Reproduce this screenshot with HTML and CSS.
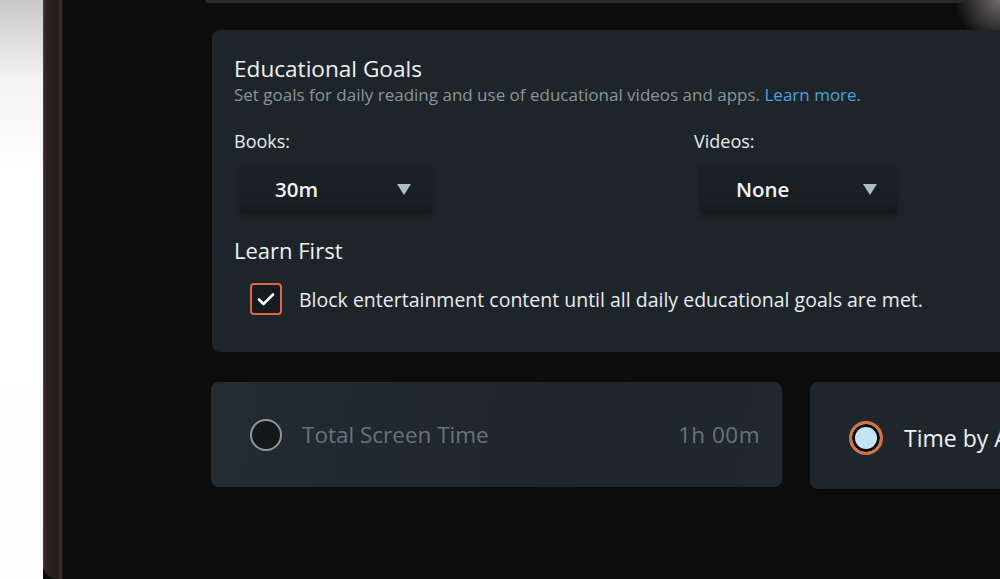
FILE: index.html
```html
<!DOCTYPE html>
<html lang="en">
<head>
  <meta charset="UTF-8">
  <title>Parental Controls - Educational Goals</title>
  <link rel="stylesheet" href="styles.css">
</head>
<body>

  <div class="backdrop"></div>
  <div class="bezel"></div>

  <main class="screen">
    <div class="prev-card"></div>

    <section class="card goals">
      <h1>Educational Goals</h1>
      <p class="subtitle">Set goals for daily reading and use of educational videos and apps. <span class="link">Learn more.</span></p>

      <div class="goal-grid">
        <div class="goal">
          <label>Books:</label>
          <div class="dropdown books">
            <span class="value">30m</span>
            <span class="caret"></span>
          </div>
        </div>
        <div class="goal">
          <label>Videos:</label>
          <div class="dropdown videos">
            <span class="value">None</span>
            <span class="caret"></span>
          </div>
        </div>
      </div>

      <h2>Learn First</h2>
      <div class="check-row">
        <span class="checkbox">
          <svg width="18" height="14" viewBox="0 0 18 14"><path d="M2 7.5l4.5 4.5L16 2.5" fill="none" stroke="#f4f6f7" stroke-width="2.6" stroke-linecap="round" stroke-linejoin="round"/></svg>
        </span>
        <span class="check-text">Block entertainment content until all daily educational goals are met.</span>
      </div>
    </section>

    <div class="option-row">
      <div class="card option total">
        <span class="radio"></span>
        <span class="option-label">Total Screen Time</span>
        <span class="option-value">1h 00m</span>
      </div>
      <div class="card option bytype">
        <span class="radio selected"></span>
        <span class="option-label">Time by Activity</span>
      </div>
    </div>
  </main>

</body>
</html>
```

FILE: styles.css
```css
/* Global reset */
* {
  margin: 0;
  padding: 0;
  box-sizing: border-box;
  font-family: 'Open Sans', sans-serif;
}

body {
  display: flex;
  width: 1000px;
  height: 579px;
  overflow: hidden;
  background-color: #0c0a0a;
}

/* Photo surroundings */
.backdrop {
  flex: 0 0 43px;
  background: linear-gradient(to bottom, #c9c9c9, #f4f4f4 14%, #ffffff 30%, #fdfdfd);
}

.bezel {
  flex: 0 0 20px;
  background: linear-gradient(to right, #4d3d39 0, #2c2221 3px, #231b1a 15px, #3e322f 18px, #120e0e 20px);
  border-bottom-left-radius: 14px;
}

.screen {
  flex: 1;
  min-width: 0;
  padding-left: 149px;
  display: flex;
  flex-direction: column;
  background: radial-gradient(circle at 100% 0, rgba(190, 185, 185, 0.55) 0, rgba(190, 185, 185, 0) 45px), #0d0c0d;
}

.prev-card {
  width: 760px;
  height: 3px;
  margin-left: -7px;
  background-color: #262b2f;
  border-radius: 0 0 6px 6px;
}

.card {
  flex-shrink: 0;
  background-color: #1e252a;
  border-radius: 8px;
}

/* Educational goals card */
.goals {
  width: 840px;
  margin-top: 27px;
  padding: 25px 22px 37px;
  color: #e8ecee;
}

.goals h1 {
  font-size: 22.6px;
  line-height: 28px;
  font-weight: 400;
  color: #eef1f2;
}

.subtitle {
  font-size: 17px;
  line-height: 22px;
  margin-top: 1px;
  color: #8b949a;
}

.subtitle .link { color: #4aa3dc; }

.goal-grid {
  display: grid;
  grid-template-columns: 460px 220px;
  margin-top: 23px;
}

.goal label {
  display: block;
  font-size: 18px;
  line-height: 24px;
  color: #e6eaec;
}

.dropdown {
  display: flex;
  justify-content: space-between;
  align-items: center;
  height: 48px;
  margin: 12px 0 0 6px;
  background: linear-gradient(to bottom, #1b2126, #191e22 80%, #15191c);
  box-shadow: 0 3px 4px rgba(0, 0, 0, 0.3);
  font-size: 20.5px;
  font-weight: 600;
  color: #f2f4f5;
}

.dropdown.books { width: 192px; padding: 0 21px 0 35px; }
.dropdown.videos { width: 197px; padding: 0 20px 0 36px; }

.caret {
  width: 0;
  height: 0;
  border-left: 7.5px solid transparent;
  border-right: 7.5px solid transparent;
  border-top: 11px solid #a7bfcc;
}

.goals h2 {
  margin-top: 23px;
  font-size: 22px;
  line-height: 28px;
  font-weight: 400;
  color: #eef1f2;
}

.check-row {
  display: flex;
  align-items: center;
  margin: 19px 0 0 16px;
}

.checkbox {
  display: flex;
  align-items: center;
  justify-content: center;
  width: 32px;
  height: 32px;
  border: 2.5px solid #e0643d;
  border-radius: 4px;
  background-color: #151a1e;
}

.check-text {
  margin-left: 17px;
  font-size: 19.5px;
  color: #e8ecee;
}

/* Screen time options */
.option-row {
  display: flex;
  gap: 28px;
  margin-top: 30px;
  margin-left: -1px;
}

.option {
  display: flex;
  align-items: center;
  height: 105px;
  padding: 0 22px 0 39px;
}

.option.total {
  width: 571px;
  background: linear-gradient(100deg, #232b33, #1f262c 60%, #20272d);
}

.option.bytype {
  width: 300px;
  height: 107px;
  padding-top: 4px;
  background-color: #1f262b;
}

.radio {
  flex-shrink: 0;
  width: 32px;
  height: 32px;
  border-radius: 50%;
  border: 2.5px solid #8e979c;
  background-color: #14181b;
}

.radio.selected {
  width: 34px;
  height: 34px;
  border: 3px solid #d9703f;
  background-color: #c3e4f5;
  box-shadow: inset 0 0 0 3px #0b0d0e;
}

.option-label {
  margin-left: 20px;
  font-size: 22.5px;
  color: #68737a;
}

.bytype .option-label {
  margin-left: 21px;
  font-size: 23px;
  color: #eef1f2;
  white-space: nowrap;
}

.option-value {
  margin-left: auto;
  font-size: 22.5px;
  letter-spacing: 0.5px;
  color: #68737a;
}
```
